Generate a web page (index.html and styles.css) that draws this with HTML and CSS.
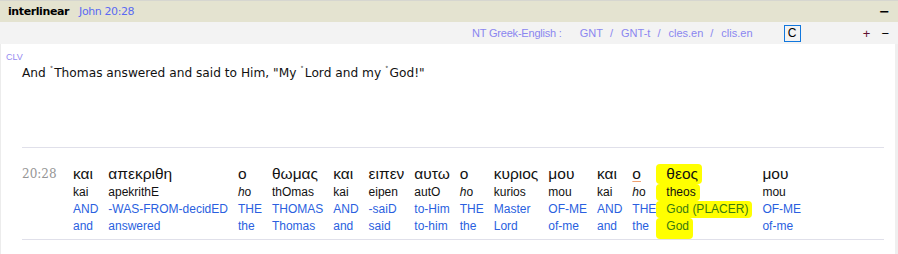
FILE: index.html
```html
<!DOCTYPE html>
<html lang="en">
<head>
    <meta charset="UTF-8">
    <title>interlinear</title>
    <link rel="stylesheet" href="styles.css">
</head>
<body>
    <div class="panel">
        <div class="titlebar">
            <span class="title">interlinear</span>
            <span class="ref">John 20:28</span>
            <span class="close">&minus;</span>
        </div>
        <div class="toolbar">
            <span class="versions">
                <span class="label">NT Greek-English :</span>
                <span>GNT</span><span class="sep">/</span>
                <span>GNT-t</span><span class="sep">/</span>
                <span>cles.en</span><span class="sep">/</span>
                <span>clis.en</span>
            </span>
            <span class="cbtn">C</span>
            <span class="zoom">
                <span class="plus">+</span>
                <span class="minus">&minus;</span>
            </span>
        </div>
        <div class="body">
            <div class="content">
                <div class="clv">CLV</div>
                <p class="verse">And <sup>˚</sup>Thomas answered and said to Him, "My <sup>˚</sup>Lord and my <sup>˚</sup>God!"</p>

                <div class="inter">
                    <div class="vnum">20:28</div>
                    <div class="words">
                        <div class="w"><span class="gk">και</span><span class="tr">kai</span><span class="en">AND</span><span class="en">and</span></div>
                        <div class="w"><span class="gk">απεκριθη</span><span class="tr">apekrithE</span><span class="en">-WAS-FROM-decidED</span><span class="en">answered</span></div>
                        <div class="w"><span class="gk">ο</span><span class="tr"><i>h</i>o</span><span class="en">THE</span><span class="en">the</span></div>
                        <div class="w"><span class="gk">θωμας</span><span class="tr">thOmas</span><span class="en">THOMAS</span><span class="en">Thomas</span></div>
                        <div class="w"><span class="gk">και</span><span class="tr">kai</span><span class="en">AND</span><span class="en">and</span></div>
                        <div class="w"><span class="gk">ειπεν</span><span class="tr">eipen</span><span class="en">-saiD</span><span class="en">said</span></div>
                        <div class="w"><span class="gk">αυτω</span><span class="tr">autO</span><span class="en">to-Him</span><span class="en">to-him</span></div>
                        <div class="w"><span class="gk">ο</span><span class="tr"><i>h</i>o</span><span class="en">THE</span><span class="en">the</span></div>
                        <div class="w"><span class="gk">κυριος</span><span class="tr">kurios</span><span class="en">Master</span><span class="en">Lord</span></div>
                        <div class="w"><span class="gk">μου</span><span class="tr">mou</span><span class="en">OF-ME</span><span class="en">of-me</span></div>
                        <div class="w"><span class="gk">και</span><span class="tr">kai</span><span class="en">AND</span><span class="en">and</span></div>
                        <div class="w"><span class="gk mark">ο</span><span class="tr"><i>h</i>o</span><span class="en">THE</span><span class="en">the</span></div>
                        <div class="w hl"><span class="gk">θεος</span><span class="tr">theos</span><span class="en">God (PLACER)</span><span class="en">God</span></div>
                        <div class="w"><span class="gk">μου</span><span class="tr">mou</span><span class="en">OF-ME</span><span class="en">of-me</span></div>
                    </div>
                </div>
            </div>
            <div class="scroll"></div>
        </div>
    </div>
</body>
</html>
```

FILE: styles.css
```css
body {
    margin: 0;
    font-family: "Liberation Sans", Arial, sans-serif;
    background-color: #fff;
}
.panel {
    width: 898px;
    height: 254px;
    display: flex;
    flex-direction: column;
    border-top: 1px solid #d6d6d0;
    box-sizing: border-box;
}
.titlebar {
    height: 21px;
    background-color: #e4e3d0;
    display: flex;
    align-items: center;
    padding-left: 8px;
    font-family: "DejaVu Sans", sans-serif;
    font-size: 11px;
}
.title {
    font-weight: bold;
    color: #000;
    letter-spacing: -0.4px;
}
.ref {
    color: #5a6af2;
    margin-left: 10px;
    letter-spacing: -0.4px;
}
.close {
    margin-left: auto;
    margin-right: 8px;
    font-weight: bold;
    font-size: 13px;
}
.toolbar {
    height: 22px;
    background-color: #f3f3f3;
    display: flex;
    align-items: center;
    font-size: 11px;
}
.versions {
    margin-left: 472px;
    color: #8a86f0;
    display: flex;
}
.versions .label {
    margin-right: 18px;
    letter-spacing: -0.2px;
}
.versions .sep {
    margin: 0 8px 0 7px;
}
.cbtn {
    margin-left: 31px;
    width: 15px;
    height: 15px;
    border: 1px solid #1177dd;
    display: flex;
    align-items: center;
    justify-content: center;
    font-size: 12px;
    color: #000;
}
.zoom {
    margin-left: auto;
    margin-right: 9px;
    display: flex;
    gap: 11px;
    font-size: 13px;
}
.plus {
    color: #601030;
}
.minus {
    color: #000;
}
.body {
    flex: 1;
    display: flex;
}
.content {
    flex: 1;
    border-left: 1px solid #ececec;
    padding: 8px 0 0 5px;
}
.scroll {
    width: 3px;
    background-color: #efefef;
}
.clv {
    font-size: 9px;
    color: #958af0;
    line-height: 11px;
}
.verse {
    margin: 3px 0 0 16px;
    font-family: "DejaVu Sans", sans-serif;
    font-size: 12.2px;
    color: #111;
}
.verse sup {
    font-size: 7px;
    vertical-align: 5px;
    margin-right: 1px;
}
.inter {
    margin: 67px 0 0 16px;
    width: 862px;
    border-top: 1px solid #e0e0ea;
    border-bottom: 1px solid #e0e0ea;
    padding: 16px 0 4px;
    display: flex;
}
.vnum {
    width: 51px;
    font-family: "DejaVu Serif", serif;
    font-size: 12px;
    color: #959595;
    line-height: 20px;
}
.words {
    display: flex;
    gap: 10px;
}
.w {
    display: flex;
    flex-direction: column;
    align-items: flex-start;
}
.w span {
    white-space: nowrap;
}
.gk {
    font-size: 15.5px;
    line-height: 20px;
    color: #111;
}
.gk.mark {
    text-decoration: underline;
    text-decoration-color: #f0a070;
    text-underline-offset: 2px;
}
.tr {
    font-size: 12px;
    line-height: 17px;
    color: #111;
}
.en {
    font-size: 12px;
    line-height: 17px;
    color: #2a5fe0;
}
.hl span {
    background-color: #ffff00;
    margin-left: -10px;
    padding: 0 4px 0 10px;
    border-radius: 4px;
}
.hl .en {
    color: #3a7a10;
}
.hl .en:last-child {
    box-shadow: 0 4px 0 #ffff00;
}
```
